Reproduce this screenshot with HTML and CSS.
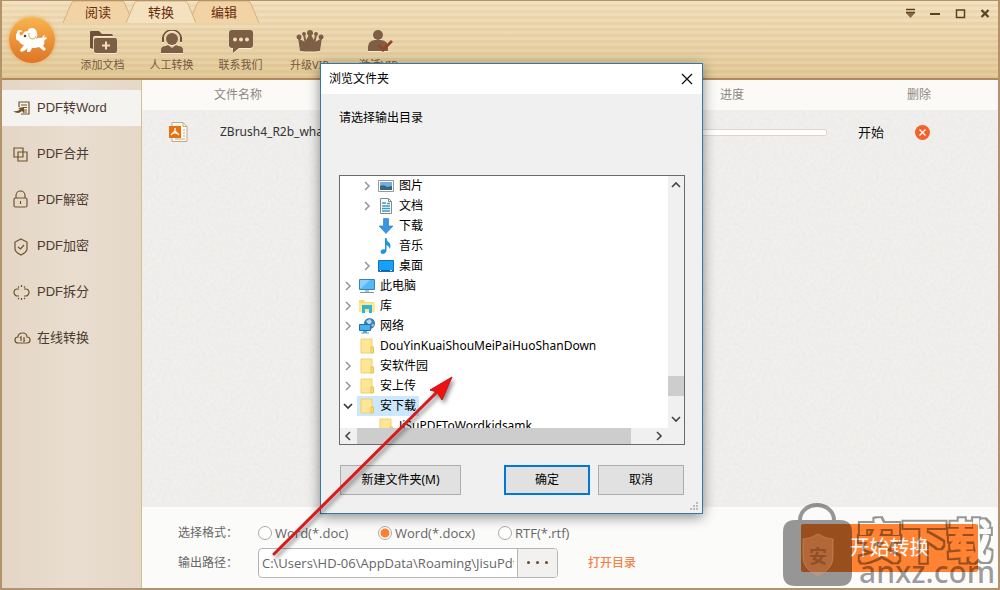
FILE: index.html
```html
<!DOCTYPE html>
<html lang="zh-CN">
<head>
    <meta charset="UTF-8">
    <meta name="viewport" content="width=device-width, initial-scale=1.0">
    <title>PDF转换</title>
    <link rel="stylesheet" href="styles.css">
</head>
<body>
    <!-- shared icons -->
    <svg class="defs" width="0" height="0" aria-hidden="true">
        <symbol id="chevron" viewBox="0 0 10 10"><path d="M3 1l4 4-4 4" fill="none" stroke="currentColor" stroke-width="1.6"/></symbol>
        <symbol id="folder" viewBox="0 0 16 16">
            <path d="M2 1h11v14H2z" fill="#ffe694" stroke="#efcf6c"/>
            <path d="M12 9h2.5v6H12z" fill="#fbdc7a" stroke="#e6c252"/>
        </symbol>
        <filter id="outline" x="-5%" y="-5%" width="110%" height="110%">
            <feMorphology in="SourceAlpha" operator="dilate" radius="3" result="outer"/>
            <feMorphology in="SourceAlpha" operator="dilate" radius="1" result="inner"/>
            <feComposite in="outer" in2="inner" operator="out"/>
        </filter>
    </svg>

    <div class="window">
        <header class="titlebar">
            <div class="logo">
                <svg viewBox="0 0 32 24" width="32" height="24">
                    <path d="M1 5q0-3 3-3 2 0 2 2l-2 0q-1 1 0 3 2 1 3-1 1-3 5-3 0-3 4-3 4 0 5 5 1 3-1 6 3-2 6-1l1-2 2-1-1 3 2-1 1 1-3 3q1 3-1 5l3 3-2 2-5-4-4 1-3 0-2 4-3 1 0-3 1-2-4 3-3 1-1-2 4-5q-4-1-5-4-4-1-4-5z" fill="#fff"/>
                    <path d="M13 5q-1 6 4 6 3-1 3-3" fill="none" stroke="#e9a04e" stroke-width="1"/>
                    <circle cx="9" cy="8" r="1.300" fill="#6b3a12"/>
                </svg>
            </div>
            <div class="titlebar-main">
                <nav class="tabs">
                    <button type="button" class="tab">
                        <svg viewBox="0 0 70 22"><path d="M0 22L8 3q1-3 4-3h46q3 0 4 3l8 19"/></svg>
                        <span>阅读</span>
                    </button>
                    <button type="button" class="tab active">
                        <svg viewBox="0 0 70 22"><path d="M0 22L8 3q1-3 4-3h46q3 0 4 3l8 19"/></svg>
                        <span>转换</span>
                    </button>
                    <button type="button" class="tab">
                        <svg viewBox="0 0 70 22"><path d="M0 22L8 3q1-3 4-3h46q3 0 4 3l8 19"/></svg>
                        <span>编辑</span>
                    </button>
                </nav>
                <div class="toolbar">
                    <button type="button" class="tool">
                        <svg viewBox="0 0 28 24"><path d="M1 18V2q0-1 1-1h8l3 3h9q2 0 2 2H6q-2 0-2 2v11z" fill="#6d5139"/><path d="M7 8h19q2 0 2 2v11q0 2-2 2H7q-2 0-2-2V10q0-2 2-2z" fill="#7d5f45"/><path d="M17 11.500v8M13 15.500h8" stroke="#f3e0bb" stroke-width="2"/></svg>
                        添加文档
                    </button>
                    <button type="button" class="tool">
                        <svg viewBox="0 0 28 24"><circle cx="14" cy="9" r="6" fill="#7d5f45"/><path d="M5 10V8a9 8 0 0118 0v2" fill="none" stroke="#6d5139" stroke-width="1.500"/><path d="M4 7h2v5H4zM22 7h2v5h-2z" fill="#6d5139"/><path d="M3 23v-3q0-4 5-4l2-1 4 3 4-3 2 1q5 0 5 4v3z" fill="#7d5f45"/></svg>
                        人工转换
                    </button>
                    <button type="button" class="tool">
                        <svg viewBox="0 0 28 24"><path d="M5 0h18q3 0 3 3v12q0 3-3 3H12l-6 5v-5H5q-3 0-3-3V3q0-3 3-3z" fill="#7d5f45"/><g fill="#f3e0bb"><circle cx="8" cy="9.500" r="2"/><circle cx="14" cy="9.500" r="2"/><circle cx="20" cy="9.500" r="2"/></g></svg>
                        联系我们
                    </button>
                    <button type="button" class="tool">
                        <svg viewBox="0 0 28 24"><path d="M4 21L2 8l7 4 5-9 5 9 7-4-2 13q-10 1-20 0z" fill="#7d5f45"/><g fill="#7d5f45"><circle cx="3" cy="7" r="2.500"/><circle cx="14" cy="3" r="3"/><circle cx="25" cy="7" r="2.500"/><circle cx="8" cy="4" r="2"/><circle cx="20" cy="4" r="2"/></g><path d="M8 5l2 9M20 5l-2 9" stroke="#7d5f45" stroke-width="2"/></svg>
                        升级VIP
                    </button>
                    <button type="button" class="tool">
                        <svg viewBox="0 0 28 24"><circle cx="13" cy="5" r="5" fill="#7d5f45"/><path d="M3 21v-4q0-6 7-7h6q7 1 7 7v4z" fill="#7d5f45"/><path d="M14 15l4 5 9-9" fill="none" stroke="#96452d" stroke-width="3"/></svg>
                        激活VIP
                    </button>
                </div>
            </div>
            <div class="window-controls">
                <button type="button" aria-label="菜单"><svg viewBox="0 0 11 11"><path d="M1 1.500h9M1 4.500h9" stroke="#5b4023" stroke-width="1.500"/><path d="M1 5h9l-4.500 5z" fill="#8a6848"/></svg></button>
                <button type="button" aria-label="最小化"><svg viewBox="0 0 11 11"><path d="M0 6h10" stroke="#5b4023" stroke-width="2"/></svg></button>
                <button type="button" aria-label="最大化"><svg viewBox="0 0 11 11"><path d="M1.500 9.500V2h8v7.500z" fill="none" stroke="#5b4023" stroke-width="1.500"/></svg></button>
                <button type="button" aria-label="关闭"><svg viewBox="0 0 11 11"><path d="M1.500 2l7 7M8.500 2l-7 7" stroke="#5b4023" stroke-width="2.200"/></svg></button>
            </div>
        </header>

        <div class="body">
            <aside class="sidebar">
                <a href="#" class="side-item active">
                    <svg viewBox="0 0 17 16"><path d="M6 7V2h10v12H8"/><path d="M8 5h6M10 7.500h4M11 10h3M10 12h4"/><path d="M0 11q5 1 7-2L5 8l6-1v6l-2-2q-4 4-9 0z" class="solid"/></svg>
                    PDF转Word
                </a>
                <a href="#" class="side-item">
                    <svg viewBox="0 0 17 16"><path d="M1 2h9v9H1zM5 6h9v9H5z"/></svg>
                    PDF合并
                </a>
                <a href="#" class="side-item">
                    <svg viewBox="0 0 17 16"><rect x="1" y="6" width="13" height="9" rx="1.500"/><path d="M3 6V3.500a4.500 4.500 0 019 0V6M7.500 9v3"/></svg>
                    PDF解密
                </a>
                <a href="#" class="side-item">
                    <svg viewBox="0 0 17 16"><path d="M8 1l6 3v7q0 3-6 6-6-3-6-6V4z"/><path d="M5 9l2.500 2L11 7"/></svg>
                    PDF加密
                </a>
                <a href="#" class="side-item">
                    <svg viewBox="0 0 17 16"><path d="M6 5H4.500a3.500 3.500 0 000 7H6M11 5h1.500a3.500 3.500 0 010 7H11M8.500 1v2M5 2.500l1 1M12 2.500l-1 1M8.500 14v2M5 15l1-1M12 15l-1-1"/></svg>
                    PDF拆分
                </a>
                <a href="#" class="side-item">
                    <svg viewBox="0 0 17 16"><path d="M5 13q-3 0-3-3t3-3q0-4 4.500-4T14 7q3 0 3 3t-3 3z"/><path d="M7 8l1-1v4M11 7v4l1-1"/></svg>
                    在线转换
                </a>
            </aside>

            <main class="content">
                <div class="files">
                    <table class="file-table">
                        <thead>
                            <tr>
                                <th class="col-icon"></th>
                                <th class="col-name">文件名称</th>
                                <th class="col-progress">进度</th>
                                <th class="col-start"></th>
                                <th class="col-delete">删除</th>
                            </tr>
                        </thead>
                        <tbody>
                            <tr>
                                <td class="col-icon">
                                    <svg viewBox="0 0 19 20" width="19" height="20"><path d="M3 .5h11l4 4v15H3z" fill="#fdfaf3" stroke="#c3aa86"/><path d="M14 .5v4h4M14 8h2M14 11h2M14 14h2M6 17h10" fill="none" stroke="#c3aa86"/><path d="M0 4h12v12H0z" fill="#e8710f"/><path d="M6 6v3l-4 4M6 9l4 4M3 12q3-2 6 0" fill="none" stroke="#fff" stroke-width="1.200"/></svg>
                                </td>
                                <td class="file-name">ZBrush4_R2b_whats_new.pdf</td>
                                <td class="col-progress"><progress value="0" max="100" aria-label="进度"></progress></td>
                                <td class="col-start"><button type="button" class="start-link">开始</button></td>
                                <td class="col-delete">
                                    <button type="button" class="delete-btn" aria-label="删除"><svg viewBox="0 0 15 15"><path d="M4.500 4.500l6 6M10.500 4.500l-6 6" stroke="#fff" stroke-width="1.300"/></svg></button>
                                </td>
                            </tr>
                        </tbody>
                    </table>
                </div>

                <form class="output">
                    <div class="options">
                        <div class="option-row">
                            <span class="option-label">选择格式：</span>
                            <label class="format"><input type="radio" name="format">Word(*.doc)</label>
                            <label class="format"><input type="radio" name="format" checked>Word(*.docx)</label>
                            <label class="format"><input type="radio" name="format">RTF(*.rtf)</label>
                        </div>
                        <div class="option-row">
                            <label class="option-label" for="path">输出路径：</label>
                            <div class="path">
                                <input type="text" id="path" value="C:\Users\HD-06\AppData\Roaming\JisuPdf">
                                <button type="button" aria-label="选择目录"><i></i><i></i><i></i></button>
                            </div>
                            <a href="#" class="open-dir">打开目录</a>
                        </div>
                    </div>
                    <button type="button" class="convert">开始转换</button>
                    <svg class="watermark" viewBox="0 0 217 85" width="217" height="85">
                        <path d="M17 17a19 17 0 0138 0h4q12 0 12 12v42q0 12-12 12H14Q2 83 2 71V29q0-12 12-12zm4 0h30a15 13 0 00-30 0z" fill="#000" fill-opacity=".4" fill-rule="evenodd"/>
                        <path d="M37 31q8 5 15 5v18q0 12-15 19-15-7-15-19V36q7 0 15-5z" fill="#f2a779" fill-opacity=".3" stroke="#d68c62" stroke-opacity=".6"/>
                        <text x="37" y="60" class="wm-badge">安</text>
                        <text x="76" y="55" class="wm-name">安下载</text>
                        <text x="78" y="80" class="wm-site">anxz.com</text>
                    </svg>
                </form>
            </main>
        </div>
    </div>

    <section class="dialog" role="dialog" aria-labelledby="dialog-title">
        <div class="dialog-title">
            <span id="dialog-title">浏览文件夹</span>
            <button type="button" aria-label="关闭"><svg viewBox="0 0 12 12" width="12" height="12"><path d="M1 1l10 10M11 1L1 11" stroke="#111" stroke-width="1.300"/></svg></button>
        </div>
        <div class="dialog-body">
            <p class="prompt">请选择输出目录</p>
            <div class="tree-box">
                <ul class="tree">
                    <li class="sub"><svg class="arrow"><use href="#chevron"/></svg><span class="node"><svg class="icon" viewBox="0 0 16 16"><path d="M.5 2.500h15v11H.5z" fill="#fff" stroke="#999"/><path d="M2 4h12v8H2z" fill="#74aee0"/><path d="M2 8q4-2 7 1l5-1v4H2z" fill="#37697a"/></svg>图片</span></li>
                    <li class="sub"><svg class="arrow"><use href="#chevron"/></svg><span class="node"><svg class="icon" viewBox="0 0 16 16"><path d="M2.500.5h8l3 3v12h-11z" fill="#fff" stroke="#888"/><path d="M10.500.5v3h3" fill="none" stroke="#888"/><path d="M4 5h4M4 8h8M4 10.500h8M4 13h8M9 5.500h3" stroke="#3b9ac8" stroke-width="1.300"/></svg>文档</span></li>
                    <li class="sub"><span class="arrow"></span><span class="node"><svg class="icon" viewBox="0 0 16 16"><path d="M5.500.5h5V8h4.500l-7 7.500L1 8h4.500z" fill="#3a94e2" stroke="#2878c0" stroke-width=".6"/></svg>下载</span></li>
                    <li class="sub"><span class="arrow"></span><span class="node"><svg class="icon" viewBox="0 0 16 16"><path d="M7 0h1.500q0 3 3 5 2 3 0 6 0-3-3-4v6q-1 3-4 3-2-.5-2-2.500 1-3 4.500-2z" fill="#1e96dc"/></svg>音乐</span></li>
                    <li class="sub"><svg class="arrow"><use href="#chevron"/></svg><span class="node"><svg class="icon" viewBox="0 0 16 16"><path d="M.5 2.500h15v11H.5z" fill="#16a0f8" stroke="#1272b8"/><path d="M1 12.500h14" stroke="#0b619f"/><path d="M2 12.500h1M12 12.500h2" stroke="#fff"/></svg>桌面</span></li>
                    <li><svg class="arrow"><use href="#chevron"/></svg><span class="node"><svg class="icon" viewBox="0 0 16 16"><path d="M.5 1.500h15v10H.5z" fill="#55b9f5" stroke="#3882ad"/><path d="M1 11L11 2H1z" fill="#8bd0fa"/><path d="M6 12h4v2H6z" fill="#9ec9e0"/><path d="M1 14.500h14" stroke="#7594a5"/></svg>此电脑</span></li>
                    <li><svg class="arrow"><use href="#chevron"/></svg><span class="node"><svg class="icon" viewBox="0 0 16 16"><path d="M0 2h5l1 2h9v10H0z" fill="#f9d978"/><path d="M0 5h16v9H0z" fill="#ffe694"/><path d="M3 15V7h10v8h-3v-4H6v4z" fill="#2bb5d8"/></svg>库</span></li>
                    <li><svg class="arrow"><use href="#chevron"/></svg><span class="node"><svg class="icon" viewBox="0 0 16 16"><circle cx="10.500" cy="5.500" r="5.500" fill="#3a80b0"/><path d="M7 3l4-2 2 3-3 3zM12 7l3-1-1 3z" fill="#b4d7e8"/><path d="M.5 6.500h11v6H.5z" fill="#45b0f2" stroke="#256fa3"/><path d="M4 13h4v2H4z" fill="#6ba3c4"/><path d="M2 15h8" stroke="#6ba3c4"/></svg>网络</span></li>
                    <li><span class="arrow"></span><span class="node"><svg class="icon"><use href="#folder"/></svg>DouYinKuaiShouMeiPaiHuoShanDown</span></li>
                    <li><svg class="arrow"><use href="#chevron"/></svg><span class="node"><svg class="icon"><use href="#folder"/></svg>安软件园</span></li>
                    <li><svg class="arrow"><use href="#chevron"/></svg><span class="node"><svg class="icon"><use href="#folder"/></svg>安上传</span></li>
                    <li><svg class="arrow open"><use href="#chevron"/></svg><span class="node selected"><svg class="icon"><use href="#folder"/></svg>安下载</span></li>
                    <li class="sub"><span class="arrow"></span><span class="node"><svg class="icon"><use href="#folder"/></svg>JiSuPDFToWordkidsamk</span></li>
                </ul>
                <div class="scroll vertical">
                    <svg class="up"><use href="#chevron"/></svg>
                    <div class="thumb"></div>
                    <svg class="down"><use href="#chevron"/></svg>
                </div>
                <div class="scroll horizontal">
                    <svg class="left"><use href="#chevron"/></svg>
                    <div class="thumb"></div>
                    <svg class="right"><use href="#chevron"/></svg>
                </div>
            </div>
            <div class="dialog-buttons">
                <button type="button" class="new-folder">新建文件夹(M)</button>
                <button type="button" class="primary">确定</button>
                <button type="button">取消</button>
            </div>
        </div>
        <svg class="grip" viewBox="0 0 9 9" width="9" height="9"><path d="M6 0h2v2H6zM3 3h2v2H3zM6 3h2v2H6zM0 6h2v2H0zM3 6h2v2H3zM6 6h2v2H6z" fill="#bbb"/></svg>
    </section>

    <!-- arrow pointing at the folder list -->
    <svg class="pointer" viewBox="0 0 190 190" width="190" height="190">
        <path d="M8 183L170 22" stroke="#d81a1a" stroke-width="3" stroke-linecap="round"/>
        <path d="M186 6l-22 13 7 2 5 8z" fill="#f01010" stroke="#c01818"/>
    </svg>
</body>
</html>
```
FILE: styles.css
```css
* {
    box-sizing: border-box;
}
body {
    margin: 0;
    font-family: "Noto Sans", "Noto Sans CJK SC", sans-serif;
    font-size: 12px;
    line-height: 20px;
    color: #111;
    overflow: hidden;
}
button, input {
    font: inherit;
    color: inherit;
}
button {
    padding: 0;
    border: none;
    background: none;
    cursor: pointer;
}
a {
    color: inherit;
    text-decoration: none;
}
.defs {
    position: absolute;
}
.window {
    display: flex;
    flex-direction: column;
    height: 100vh;
    border: 2px solid #b4936b;
    border-top-width: 1px;
}

/* Title bar */
.titlebar {
    display: flex;
    height: 79px;
    border-bottom: 2px solid #b08a5c;
    background:
        repeating-linear-gradient(rgba(170, 125, 60, 0) 0 3px, rgba(170, 125, 60, 0.09) 3px 6px),
        linear-gradient(#f3e2c0, #e4cb9b);
}
.logo {
    display: flex;
    align-items: center;
    justify-content: center;
    width: 46px;
    height: 46px;
    margin: 16px 0 0 7px;
    border-radius: 50%;
    background: linear-gradient(#f9b44d, #dd7425);
    box-shadow: 0 0 4px #e8a860;
}
.titlebar-main {
    flex: 1;
    margin-left: 8px;
}
.tabs {
    display: flex;
}
.tab {
    display: grid;
    width: 70px;
    height: 22px;
    margin-right: -7px;
    font-size: 13px;
    line-height: 22px;
    color: #6b2c0c;
}
.tab svg,
.tab span {
    grid-area: 1 / 1;
}
.tab svg {
    width: 70px;
    height: 22px;
    fill: #f1d3a6;
    stroke: #d3b27c;
}
.tab.active {
    z-index: 1;
}
.tab.active svg {
    fill: #f3e1bf;
}
.toolbar {
    display: flex;
    margin-left: 5px;
    padding-top: 7px;
}
.tool {
    width: 69px;
    font-size: 11px;
    line-height: 22px;
    color: #75593c;
    white-space: nowrap;
}
.tool svg {
    display: block;
    width: 28px;
    height: 24px;
    margin: 0 auto;
    filter: drop-shadow(0 1px 0 #f8ebd0);
}
.window-controls {
    display: flex;
    gap: 14px;
    margin: 7px 7px 0 0;
}
.window-controls button {
    width: 11px;
    height: 11px;
}
.window-controls svg {
    display: block;
}

/* Sidebar */
.body {
    display: flex;
    flex: 1;
    min-height: 0;
}
.sidebar {
    display: flex;
    flex-direction: column;
    gap: 10px;
    width: 140px;
    padding-top: 10px;
    border-right: 1px solid #d9bf8c;
    background: linear-gradient(90deg, #e4d6c5, #e8ddcf 50%, #e5d8c8);
}
.side-item {
    display: flex;
    align-items: center;
    gap: 7px;
    height: 36px;
    padding-left: 11px;
    font-family: "Liberation Sans", "Noto Sans CJK SC", sans-serif;
    font-size: 13px;
    color: #4d3b30;
}
.side-item.active {
    background: #f5f3f0;
}
.side-item svg {
    width: 17px;
    height: 16px;
    overflow: visible;
    fill: none;
    stroke: #6e5528;
    stroke-width: 1.2;
}
.side-item .solid {
    fill: #6e5528;
    stroke: none;
}

/* File list */
.content {
    display: flex;
    flex: 1;
    flex-direction: column;
    min-width: 0;
}
.files {
    flex: 1;
    background-color: #f1f0ee;
    background-image: url("data:image/svg+xml,%3Csvg xmlns='http://www.w3.org/2000/svg' width='120' height='120'%3E%3Cfilter id='n'%3E%3CfeTurbulence type='fractalNoise' baseFrequency='.35' numOctaves='2' stitchTiles='stitch'/%3E%3CfeColorMatrix values='0 0 0 0 .4 0 0 0 0 .4 0 0 0 0 .35 .16 0 0 0 -.05'/%3E%3C/filter%3E%3Crect width='120' height='120' filter='url(%23n)'/%3E%3C/svg%3E");
}
.file-table {
    width: 100%;
    table-layout: fixed;
    border-collapse: collapse;
}
.file-table th,
.file-table td {
    padding: 0;
    text-align: left;
}
.file-table th {
    height: 30px;
    background: #fbfaf7;
    font-weight: normal;
    color: #8b8883;
}
.file-table td {
    height: 44px;
    vertical-align: middle;
}
.file-table svg {
    display: block;
}
.col-icon {
    width: 72px;
}
.file-table td.col-icon {
    padding-left: 27px;
}
.file-table td.file-name {
    padding-left: 6px;
    white-space: nowrap;
    overflow: hidden;
    color: #333;
}
.file-table .col-progress {
    width: 212px;
    text-align: center;
}
.file-table .col-start {
    width: 66px;
    text-align: center;
}
.file-table .col-delete {
    width: 94px;
    padding-left: 3px;
}
.file-table td.col-delete {
    padding-left: 11px;
}
progress {
    display: block;
    width: 190px;
    height: 7px;
    margin: 0 auto;
    appearance: none;
    border: 1px solid #e0d5c8;
    border-radius: 2px;
    background: #fff;
}
progress::-webkit-progress-bar {
    background: #fff;
}
.start-link {
    font-size: 13px;
}
.delete-btn {
    display: block;
    width: 15px;
    height: 15px;
    border-radius: 50%;
    background: #f2622a;
}

/* Output settings */
.output {
    position: relative;
    display: flex;
    align-items: center;
    justify-content: space-between;
    height: 81px;
    padding: 0 20px 0 36px;
    background: #fbfbfa;
    color: #666;
}
.option-row {
    display: flex;
    align-items: center;
    height: 30px;
}
.option-label {
    width: 80px;
}
.format {
    display: flex;
    align-items: center;
    gap: 3px;
    width: 120px;
    font-family: "Open Sans", sans-serif;
    font-size: 13px;
}
.format input {
    width: 14px;
    height: 14px;
    margin: 0;
    appearance: none;
    border: 1px solid #aaa;
    border-radius: 50%;
    background: #fff;
}
.format input:checked {
    background: radial-gradient(#ff7f32 0 4px, #fff 5px);
}
.path {
    display: flex;
    width: 300px;
    height: 30px;
    border: 1px solid #b5b5b5;
    border-radius: 4px;
    background: #fff;
    overflow: hidden;
}
.path input {
    flex: 1;
    min-width: 0;
    padding: 0 3px;
    border: none;
    background: none;
    font-family: "Open Sans", sans-serif;
    font-size: 13px;
}
.path button {
    display: flex;
    align-items: center;
    justify-content: center;
    gap: 6px;
    width: 40px;
    border-left: 1px solid #b5b5b5;
    background: #f2f1f0;
}
.path i {
    width: 3px;
    height: 3px;
    border-radius: 50%;
    background: #6b4a34;
}
.open-dir {
    margin-left: 30px;
    font-weight: 500;
    color: #f58345;
}
.convert {
    width: 177px;
    height: 48px;
    border-radius: 2px;
    background: #ff8332;
    font-size: 20px;
    color: #fff;
}
.watermark {
    position: absolute;
    right: 0;
    bottom: 0;
    pointer-events: none;
}
.wm-badge {
    font-size: 18px;
    font-weight: bold;
    text-anchor: middle;
    fill: #8f4f2b;
}
.wm-name {
    font-size: 45px;
    font-weight: 500;
    fill: #000;
    opacity: 0.4;
    filter: url(#outline);
}
.wm-site {
    font-size: 30px;
    font-weight: 500;
    fill: #000;
    fill-opacity: 0.4;
}

/* Browse dialog */
.dialog {
    position: absolute;
    top: 63px;
    left: 32%;
    width: 383px;
    border: 1px solid #3279a8;
    background: #f0f0f0;
    box-shadow: 0 3px 12px rgba(0, 0, 0, 0.45);
    color: #000;
}
.dialog-title {
    display: flex;
    align-items: center;
    justify-content: space-between;
    height: 30px;
    padding: 0 9px 0 8px;
    background: #fff;
}
.dialog-title svg {
    display: block;
}
.dialog-body {
    padding: 14px 17px 18px 18px;
}
.prompt {
    height: 67px;
    margin: 0;
}
.tree-box {
    display: grid;
    grid-template-columns: 1fr 16px;
    grid-template-rows: 252px 16px;
    border: 1px solid #6a6a6a;
}
.tree {
    margin: 0;
    padding: 0;
    list-style: none;
    background: #fff;
    overflow: hidden;
}
.tree li {
    display: flex;
    height: 20px;
}
.tree .sub {
    padding-left: 19px;
}
.arrow {
    width: 10px;
    height: 10px;
    margin: 5px 4px 5px 3px;
    color: #999;
}
.arrow.open {
    color: #333;
    transform: rotate(90deg);
}
.node {
    display: flex;
    align-items: center;
    gap: 5px;
    padding: 0 3px 0 2px;
    white-space: nowrap;
}
.node.selected {
    background: #cce8ff;
}
.icon {
    width: 16px;
    height: 16px;
}
.scroll {
    display: flex;
    align-items: center;
    color: #444;
}
.scroll svg {
    flex: none;
    width: 10px;
    height: 10px;
}
.scroll .thumb {
    background: #cdcdcd;
}
.vertical {
    flex-direction: column;
    padding: 4px 0;
}
.vertical .thumb {
    width: 100%;
    height: 20px;
    margin: auto 0 18px;
}
.horizontal {
    padding: 0 4px 0 3px;
}
.horizontal .thumb {
    width: 274px;
    height: 100%;
    margin: 0 auto 0 4px;
}
.up {
    transform: rotate(-90deg);
}
.down {
    transform: rotate(90deg);
}
.left {
    transform: rotate(180deg);
}
.dialog-buttons {
    display: flex;
    gap: 8px;
    padding: 20px 1px 0;
}
.dialog-buttons button {
    width: 86px;
    height: 30px;
    border: 1px solid #adadad;
    background: #e1e1e1;
}
.dialog-buttons .new-folder {
    width: 121px;
    margin-right: auto;
}
.dialog-buttons .primary {
    border: 2px solid #0078d7;
}
.grip {
    position: absolute;
    right: 3px;
    bottom: 2px;
}
.pointer {
    position: absolute;
    top: 371px;
    left: 266px;
    pointer-events: none;
    filter: drop-shadow(2px 3px 2px rgba(0, 0, 0, 0.45));
}
```
